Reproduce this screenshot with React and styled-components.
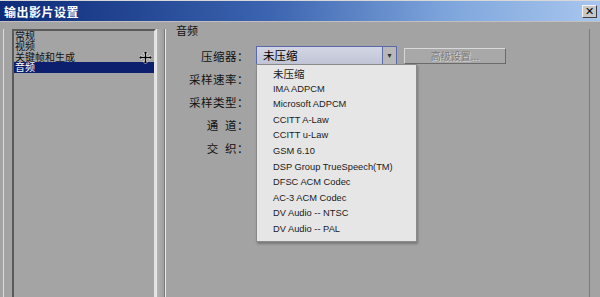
import React from "react";
import styled, { createGlobalStyle } from "styled-components";

const CJK = `"Noto Sans CJK SC", "DejaVu Sans", sans-serif`;
const LATIN = `"Liberation Sans", "Noto Sans CJK SC", sans-serif`;

const GlobalStyle = createGlobalStyle`
  html, body {
    margin: 0;
    padding: 0;
    background: #a3a3a3;
    overflow: hidden;
  }
  * { box-sizing: border-box; }
`;

const SECTIONS = ["常规", "视频", "关键帧和生成", "音频"];

const CODECS = [
  "未压缩",
  "IMA ADPCM",
  "Microsoft ADPCM",
  "CCITT A-Law",
  "CCITT u-Law",
  "GSM 6.10",
  "DSP Group TrueSpeech(TM)",
  "DFSC ACM Codec",
  "AC-3 ACM Codec",
  "DV Audio -- NTSC",
  "DV Audio -- PAL",
];

const FIELDS = ["压缩器：", "采样速率：", "采样类型：", "通  道：", "交  织："];

const Window = styled.div`
  width: 600px;
  height: 297px;
  display: flex;
  flex-direction: column;
  background: #a3a3a3;
  border-top: 1px solid #d8d8d8;
  overflow: hidden;
`;

const TitleBar = styled.div`
  height: 20px;
  flex: none;
  display: flex;
  align-items: center;
  justify-content: space-between;
  padding: 0 3px 0 4px;
  background: linear-gradient(90deg, #0c2a78 0%, #3c64b0 45%, #7fa6dc 75%, #a8c6ee 100%);
`;

const Title = styled.span`
  color: #ffffff;
  font-family: ${CJK};
  font-weight: 700;
  font-size: 12px;
  letter-spacing: 0.5px;
`;

const CloseButton = styled.div`
  width: 15px;
  height: 13px;
  display: flex;
  align-items: center;
  justify-content: center;
  background: #c8c8c8;
  border: 1px solid;
  border-color: #f2f2f2 #404040 #404040 #f2f2f2;
  font-family: "DejaVu Sans", sans-serif;
  font-weight: 700;
  font-size: 11px;
  line-height: 1;
  color: #000;
`;

const Body = styled.div`
  flex: 1;
  display: flex;
  padding: 7px 0 0 3px;
  border-top: 1px solid #c0c0c0;
`;

const Sidebar = styled.div`
  width: 153px;
  flex: none;
  border-left: 1px solid #dcdcdc;
  padding-left: 8px;
  display: flex;
`;

const ListBox = styled.ul`
  list-style: none;
  margin: 0;
  padding: 0;
  flex: 1;
  position: relative;
  border-top: 2px solid #5a5a5a;
  border-left: 2px solid #5a5a5a;
  border-right: 2px solid #e4e4e4;
  background: #a4a4a4;
`;

const ListItem = styled.li`
  height: 10.4px;
  line-height: 10.4px;
  padding-left: 1px;
  font-family: ${CJK};
  font-size: 10px;
  color: ${({ $selected }) => ($selected ? "#ffffff" : "#111111")};
  background: ${({ $selected }) => ($selected ? "#0c1f6e" : "transparent")};
  white-space: nowrap;
`;

const MoveCursor = styled.svg`
  position: absolute;
  right: 2px;
  top: 20px;
`;

const Separator = styled.div`
  width: 9px;
  flex: none;
  border-left: 1px solid #e8e8e8;
  border-right: 1px solid #7a7a7a;
  background: linear-gradient(90deg, #b4b4b4, #9c9c9c);
`;

const Panel = styled.div`
  flex: 1;
  display: flex;
  flex-direction: column;
  border-left: 1px solid #e8e8e8;
  border-right: 1px solid #7c7c7c;
  margin-right: 10px;
  position: relative;
`;

const GroupTitle = styled.div`
  font-family: ${CJK};
  font-size: 11px;
  color: #111;
  padding-left: 10px;
  height: 15px;
  line-height: 12px;
  margin-top: -5px;
`;

const Form = styled.div`
  display: grid;
  grid-template-columns: 83px auto auto;
  grid-auto-rows: 23px;
  column-gap: 7px;
  margin-top: 5px;
  align-items: center;
  justify-content: start;
`;

const Label = styled.div`
  grid-column: 1;
  text-align: right;
  font-family: ${CJK};
  font-size: 11.5px;
  color: #111;
  white-space: pre;
  letter-spacing: 0.5px;
`;

const ComboWrap = styled.div`
  position: relative;
  grid-column: 2;
`;

const Combo = styled.div`
  width: 141px;
  height: 19px;
  display: flex;
  background: #e0e0e0;
  border: 1px solid #5a6aa8;
`;

const ComboValue = styled.div`
  flex: 1;
  padding-left: 6px;
  font-family: ${CJK};
  font-size: 11.5px;
  line-height: 17px;
  color: #000;
  background: linear-gradient(180deg, #d2d6e4, #c0c4d4);
`;

const ComboArrow = styled.div`
  width: 14px;
  display: flex;
  align-items: center;
  justify-content: center;
  border-left: 1px solid #5a6aa8;
  background: #b8b8b8;
  color: #333;
  font-size: 7px;
`;

const Dropdown = styled.ul`
  position: absolute;
  left: 0;
  top: 18px;
  width: 161px;
  margin: 0;
  padding: 1px 0 3px 0;
  list-style: none;
  background: #e6e6e6;
  border: 1px solid #8a8a8a;
  box-shadow: 1px 2px 2px rgba(80, 80, 80, 0.5);
  z-index: 2;
`;

const Option = styled.li`
  height: 15.6px;
  line-height: 15.6px;
  padding-left: 16px;
  font-family: ${({ $cjk }) => ($cjk ? CJK : LATIN)};
  font-size: ${({ $cjk }) => ($cjk ? "10.5px" : "9.3px")};
  color: #1a1a1a;
  white-space: nowrap;
`;

const AdvancedButton = styled.div`
  grid-column: 3;
  width: 102px;
  height: 16px;
  display: flex;
  align-items: center;
  justify-content: center;
  border: 1px solid;
  border-color: #d8d8d8 #6a6a6a #6a6a6a #d8d8d8;
  background: #a8a8a8;
  font-family: ${CJK};
  font-size: 10px;
  color: #7a7a7a;
  text-shadow: 1px 1px 0 #d8d8d8;
`;

export default function App() {
  return (
    <>
      <GlobalStyle />
      <Window>
        <TitleBar>
          <Title>输出影片设置</Title>
          <CloseButton>✕</CloseButton>
        </TitleBar>
        <Body>
          <Sidebar>
            <ListBox>
              {SECTIONS.map((s, i) => (
                <ListItem key={s} $selected={i === SECTIONS.length - 1}>
                  {s}
                </ListItem>
              ))}
              <MoveCursor width="13" height="13" viewBox="0 0 13 13">
                <path
                  d="M6.5 0 L9 2.5 H7.5 V5.5 H10.5 V4 L13 6.5 L10.5 9 V7.5 H7.5 V10.5 H9 L6.5 13 L4 10.5 H5.5 V7.5 H2.5 V9 L0 6.5 L2.5 4 V5.5 H5.5 V2.5 H4 Z"
                  fill="#000"
                  stroke="#fff"
                  strokeWidth="0.6"
                />
              </MoveCursor>
            </ListBox>
          </Sidebar>
          <Separator />
          <Panel>
            <GroupTitle>音频</GroupTitle>
            <Form>
              {FIELDS.map((f, i) => (
                <React.Fragment key={f}>
                  <Label>{f}</Label>
                  {i === 0 && (
                    <>
                      <ComboWrap>
                        <Combo>
                          <ComboValue>未压缩</ComboValue>
                          <ComboArrow>▼</ComboArrow>
                        </Combo>
                        <Dropdown>
                          {CODECS.map((c, j) => (
                            <Option key={c} $cjk={j === 0}>
                              {c}
                            </Option>
                          ))}
                        </Dropdown>
                      </ComboWrap>
                      <AdvancedButton>高级设置...</AdvancedButton>
                    </>
                  )}
                </React.Fragment>
              ))}
            </Form>
          </Panel>
        </Body>
      </Window>
    </>
  );
}
